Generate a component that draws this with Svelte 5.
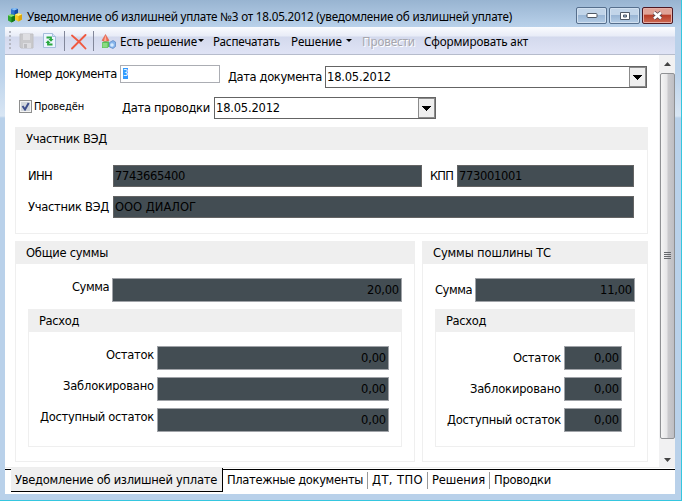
<script>
  // Spreads the letters so that a caption takes its designed width.
  function fit(node, width) {
    const natural = node.getBoundingClientRect().width;
    node.style.letterSpacing = `${(width - natural) / node.textContent.length}px`;
  }

  const rows = ['Остаток', 'Заблокировано', 'Доступный остаток'];
  const rowWidths = [48, 91, 114];
  const tabs = [
    ['Платежные документы', 136],
    ['ДТ, ТПО', 51],
    ['Решения', 53],
    ['Проводки', 57]
  ];
</script>

{#snippet t(text, width)}<span class="t" use:fit={width}>{text}</span>{/snippet}

{#snippet combo(cls)}
  <div class="combo {cls}">
    {@render t('18.05.2012', 64)}
    <div class="drop"><svg width="9" height="5" shape-rendering="crispEdges"><path d="M0 0H9L4.5 5Z" fill="#000" /></svg></div>
  </div>
{/snippet}

{#snippet sums(cls, title, titleWidth, sum, sumWidth)}
  <section class="group {cls}">
    <header>{@render t(title, titleWidth)}</header>
    <div class="sum">
      <label class="lab">{@render t('Сумма', 37)}</label>
      <div class="num">{@render t(sum, sumWidth)}</div>
    </div>
    <section class="group inner">
      <header>{@render t('Расход', 40)}</header>
      <div class="rows">
        {#each rows as row, i}
          <div class="row">
            <label class="lab">{@render t(row, rowWidths[i])}</label>
            <div class="num">{@render t('0,00', 25)}</div>
          </div>
        {/each}
      </div>
    </section>
  </section>
{/snippet}

<div class="window">
  <div class="title">
    <svg class="app" width="16" height="16" viewBox="0 0 16 16">
      <path d="M4 2Q7.500 0 11 2v6l-3.500 1.500L4 8z" fill="#2f74d0" /><path d="M4 2Q7.500 0 11 2L7.500 3.500z" fill="#8ac0f5" /><path d="M7.500 3.500L11 2v6L7.500 9.500z" fill="#134ba5" />
      <path d="M8 7.500Q11.500 5.500 15 7.500v5L11.500 14.500 8 12.500z" fill="#f7cb25" /><path d="M8 7.500Q11.500 5.500 15 7.500L11.500 9z" fill="#fff080" /><path d="M11.500 9L15 7.500v5l-3.500 2z" fill="#dca60c" />
      <path d="M1 8.500Q4.500 6.500 8 8.500v5L4.500 15.500 1 13.500z" fill="#2fa432" /><path d="M1 8.500Q4.500 6.500 8 8.500L4.500 10z" fill="#8be26c" /><path d="M4.500 10L8 8.500v5l-3.500 2z" fill="#12751a" />
    </svg>
    {@render t('Уведомление об излишней уплате №3 от 18.05.2012 (уведомление об излишней уплате)', 485)}
    <div class="buttons">
      <div class="wb"><svg width="12" height="7"><rect x="1" y="1.500" width="10" height="4" rx="1" fill="#fff" stroke="#505966" /></svg></div>
      <div class="wb"><svg width="12" height="10"><path d="M1.500 1.500h9v7h-9z" fill="#fff" stroke="#505966" /><path d="M4.500 4h3v2h-3z" fill="#9bb7d6" stroke="#505966" /></svg></div>
      <div class="wb close"><svg width="13" height="11"><path d="M3 2.500l7 6M10 2.500l-7 6" stroke="#56434b" stroke-width="4.200" /><path d="M3 2.500l7 6M10 2.500l-7 6" stroke="#fff" stroke-width="2.500" /></svg></div>
    </div>
  </div>

  <div class="toolbar">
    <svg class="grip" width="3" height="24"><path d="M1 4v20" stroke="#b4b7c2" stroke-width="2" stroke-dasharray="2 2" /></svg>
    <svg class="save" width="15" height="16" viewBox="0 0 15 16">
      <path d="M1 1h13v14H2l-1-1z" fill="#c9c9cc" stroke="#c0c0c3" /><path d="M4 1h7v6H4z" fill="#dedee2" /><path d="M4 10h8v5H4z" fill="#dcdce0" /><path d="M5 11h3v4H5z" fill="#bebec2" />
    </svg>
    <svg class="refresh" width="13" height="15" viewBox="0 0 13 15">
      <path d="M.5.5h9l3 3v11H.5z" fill="#edf5ff" stroke="#a5bddb" /><path d="M9.500.5v3h3" fill="#d2e2f5" stroke="#a5bddb" />
      <path d="M3.500 4.500H8V7M9.500 11.500H5V9" fill="none" stroke="#28a83e" stroke-width="1.800" /><path d="M5.500 6h5L8 8.700zM7.500 10h-5L5 7.300z" fill="#28a83e" />
    </svg>
    <i class="sep"></i>
    <svg class="del" width="16" height="16" viewBox="0 0 16 16"><path d="M1 1.500Q8 7 14.500 14.500M14.500 1L1 14.500" fill="none" stroke="#ef5940" stroke-width="1.900" stroke-linecap="round" /></svg>
    <i class="sep"></i>
    <svg class="shapes" width="15" height="15" viewBox="0 0 15 15">
      <path d="M4.500.5L8 6.500Q4.500 8.500 1 6.500z" fill="#ee7058" stroke="#d8533e" stroke-width=".5" /><path d="M4.500 1L5.500 7H3z" fill="#ffb09a" />
      <path d="M1 8.500L3 7.500h5v5L6.500 14H1z" fill="#57bd55" /><path d="M1.500 9h5v4.500h-5z" fill="#8bdb82" />
      <path d="M8.500 8.500L12 6.500l2.500 1.500v4.500L12 14.500 8.500 13z" fill="#86b5ec" stroke="#5682c0" stroke-width=".7" /><circle cx="11" cy="11" r="1.800" fill="#d5eaff" />
    </svg>
    <span class="b1">{@render t('Есть решение', 77)}</span><i class="arrow"></i>
    <span class="b2">{@render t('Распечатать', 67)}</span>
    <span class="b3">{@render t('Решение', 51)}</span><i class="arrow a2"></i>
    <span class="b4">{@render t('Провести', 53)}</span>
    <span class="b5">{@render t('Сформировать акт', 104)}</span>
  </div>

  <div class="body">
    <div class="form">
      <div class="line one">
        <label class="lab">{@render t('Номер документа', 102)}</label>
        <div class="edit"><mark>3</mark></div>
        <label class="lab second">{@render t('Дата документа', 94)}</label>
        {@render combo('wide')}
      </div>
      <div class="line two">
        <div class="check"><svg width="9" height="9"><path d="M1.500 4l2.500 3.500L7.700 1" fill="none" stroke="#3c4d8c" stroke-width="2" /></svg></div>
        <label class="small">{@render t('Проведён', 50)}</label>
        <label class="lab posted">{@render t('Дата проводки', 88)}</label>
        {@render combo('narrow')}
      </div>

      <section class="group party">
        <header>{@render t('Участник ВЭД', 81)}</header>
        <div class="prow">
          <label class="lab">{@render t('ИНН', 24)}</label>
          <div class="val inn">{@render t('7743665400', 70)}</div>
          <label class="lab kpp">{@render t('КПП', 23)}</label>
          <div class="val">{@render t('773001001', 63)}</div>
        </div>
        <div class="prow">
          <label class="lab">{@render t('Участник ВЭД', 81)}</label>
          <div class="val">{@render t('ООО ДИАЛОГ', 81)}</div>
        </div>
      </section>

      <div class="pair">
        {@render sums('left', 'Общие суммы', 82, '20,00', 32)}
        {@render sums('right', 'Суммы пошлины ТС', 118, '11,00', 32)}
      </div>
    </div>
    <div class="scroll">
      <svg class="up" width="7" height="4"><path d="M0 4L3.500 0 7 4z" fill="#444" /></svg>
      <div class="thumb"><i></i><i></i><i></i><i></i></div>
      <svg class="down" width="7" height="4"><path d="M0 0h7L3.500 4z" fill="#444" /></svg>
    </div>
  </div>

  <div class="tabs">
    <div class="active">{@render t('Уведомление об излишней уплате', 202)}</div>
    {#each tabs as [name, width]}
      <div class="tab">{@render t(name, width)}</div>
    {/each}
  </div>
</div>

<style>
  :global(body) { margin: 0; overflow: hidden; }
  .window, .window * { box-sizing: border-box; }
  .window {
    width: 682px; height: 501px; padding: 0 6px 6px 5px;
    display: flex; flex-direction: column;
    background: linear-gradient(#98b4d1 0, #b9d1ea 27px, #b9d1ea 70px, #d9e6f4 116px, #b9d1ea 118px);
    border-right: 1px solid #35c6df; border-bottom: 1px solid #35c6df;
    font: 12.8px/16px "DejaVu Sans Condensed", "DejaVu Sans", sans-serif; color: #000;
  }
  svg { display: block; flex: none; }
  .t { display: inline-block; white-space: pre; }
  .title { height: 27px; flex: none; display: flex; align-items: flex-start; font: 11.7px/16px "Noto Sans", sans-serif; }
  .title > .t { margin: 8px 0 0 4px; }
  .app { margin: 7px 0 0 2px; }
  .buttons { margin: 7px 2px 0 auto; display: flex; gap: 2px; }
  .wb {
    width: 31px; height: 17px; border: 1px solid #566f8d; border-radius: 2px;
    box-shadow: inset 0 0 0 1px #d1e0f0;
    background: linear-gradient(#c2d5e9 0 45%, #9ab6d5 50%, #b4cde6);
    display: flex; align-items: center; justify-content: center;
  }
  .close { border-color: #4c1822; box-shadow: inset 0 0 0 1px #e6aea5; background: linear-gradient(#e0a397 0 40%, #b83e29 50%, #ce6a52); }
  .toolbar {
    height: 28px; width: 670px; flex: none; display: flex; align-items: flex-start;
    background: linear-gradient(#fafbfe 0, #e8ecf7 9px, #d3d9ed 10px, #dfe3f5 26px);
    border-bottom: 1px solid #b6bccc; font: 11.7px/16px "Noto Sans", sans-serif;
  }
  .toolbar > span { margin-top: 6px; height: 16px; flex: none; }
  .grip { margin: 0 0 0 4px; }
  .save { margin: 6px 0 0 7px; }
  .refresh { margin: 6px 0 0 9px; }
  .sep { width: 1px; height: 20px; background: #82879a; margin: 4px 0 0 8px; flex: none; }
  .del { margin: 7px 0 0 6px; }
  .del + .sep { margin-left: 6px; }
  .shapes { margin: 7px 0 0 7px; }
  .b1 { margin-left: 4px; }
  .arrow { margin: 12px 0 0 1px; border: 3px solid transparent; border-top: 3px solid #000; border-bottom: 0; flex: none; }
  .a2 { margin-left: 4px; }
  .b2 { margin-left: 9px; }
  .b3 { margin-left: 11px; }
  .b4 { margin-left: 10px; color: #a6a6ad; text-shadow: 1px 1px #fff; }
  .b5 { margin-left: 9px; }

  .body { height: 413px; flex: none; display: flex; background: #fff; border-bottom: 1px solid #eee; }
  .form { width: 654px; padding: 10px 11px 0 10px; flex: none; }
  .lab { white-space: nowrap; display: block; flex: none; }
  .line { display: flex; }
  .one { height: 32px; }
  .one .lab { margin-top: 1px; width: 105px; }
  .one .second { width: 97px; margin: 4px 0 0 8px; }
  .edit { width: 100px; height: 18px; border: 1px solid #abadb3; padding: 2px; line-height: 12px; }
  mark { display: block; width: 5px; height: 11px; background: #3399ff; color: #fff; font-size: 9px; line-height: 11px; }
  .combo { height: 22px; border: 1px solid #646464; display: flex; padding: 0 0 0 1px; line-height: 20px; }
  .wide { width: 322px; margin-top: 1px; }
  .narrow { width: 222px; }
  .drop { width: 17px; height: 20px; margin-left: auto; background: #efefef; border: 1px solid #8b8b8b; display: flex; align-items: center; justify-content: center; }
  .two { height: 30px; }
  .check { width: 13px; height: 13px; border: 1px solid #8e8f8f; box-shadow: inset 0 0 0 1px #f4f4f4; background: #d2d7dc; margin: 3px 0 0 4px; padding: 1px; }
  .small { font-size: 11px; margin: 2px 0 0 2px; width: 52px; }
  .posted { margin: 3px 0 0 36px; width: 92px; }

  .group { border: 1px solid #efefef; }
  .group > header { height: 22px; background: #efefef; padding: 3px 0 0 10px; line-height: 16px; }
  .party { width: 633px; height: 107px; }
  .prow { display: flex; height: 22px; padding: 0 13px 0 12px; margin-top: 15px; }
  .prow + .prow { margin-top: 9px; }
  .prow .lab { width: 85px; padding-top: 3px; }
  .prow .kpp { width: 27px; margin-left: 8px; }
  .val { flex: 1; height: 22px; border: 1px solid #646464; background: #434d53; padding: 2px 1px; }
  .val.inn { flex: none; width: 309px; }
  .pair { display: flex; gap: 7px; margin-top: 7px; }
  .left { width: 400px; height: 221px; }
  .right { width: 226px; height: 221px; }
  .sum, .row { display: flex; }
  .sum { margin-top: 14px; padding-right: 12px; }
  .num { height: 24px; flex: 1; border: 1px solid #a0a3a8; background: #434d53; text-align: right; padding: 3px 2px 0 0; }
  .sum .lab { width: 96px; padding: 1px 3px 0 0; text-align: right; }
  .inner { margin: 7px 12px 0; height: 138px; }
  .rows { display: flex; flex-direction: column; gap: 7px; padding: 14px 12px 0 0; }
  .row .lab { width: 128px; padding: 1px 3px 0 0; text-align: right; }
  .right .sum .lab { width: 52px; padding-top: 4px; }
  .right .lab { padding-top: 4px; }

  .scroll { flex: 1; background: #f1f1f2; display: flex; flex-direction: column; align-items: center; }
  .up { margin-top: 7px; }
  .thumb {
    width: 15px; height: 366px; margin-top: 7px; border: 1px solid #8f9194; border-radius: 2px;
    background: linear-gradient(90deg, #f5f5f5, #e6e6e8 45%, #cacacd 55%, #bebec3);
    display: flex; flex-direction: column; align-items: center; justify-content: center; gap: 1px; padding-bottom: 2px;
  }
  .thumb i { width: 7px; height: 1px; background: #66696d; }
  .down { margin-top: 19px; }

  .tabs { height: 26px; flex: none; display: flex; background: linear-gradient(#fff 1px, #000 1px 2px, #fff 2px); }
  .active { width: 212px; height: 24px; margin-left: 6px; padding: 4px 0 0 4px; background: #efefef; border-right: 1px solid #000; border-bottom: 1px solid #000; }
  .tab { height: 17px; margin-top: 4px; padding: 0 4px 0 4px; border-right: 1px solid #999; }
  .tab:last-child { border: 0; }
</style>
